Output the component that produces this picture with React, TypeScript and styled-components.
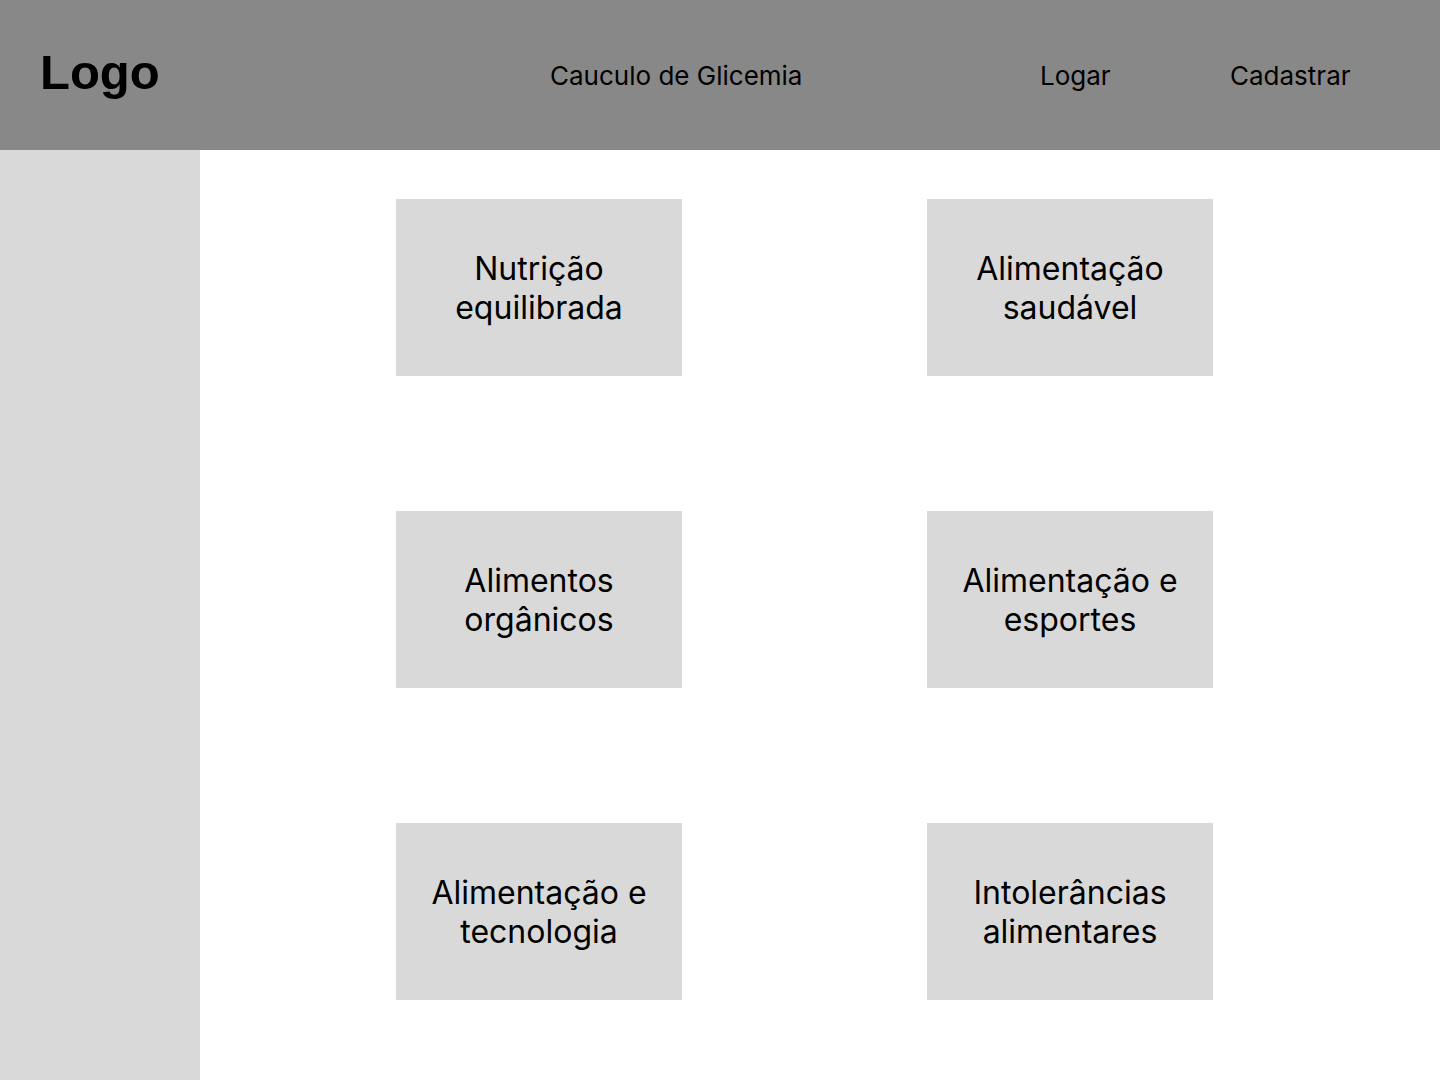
import React from "react";
import styled, { createGlobalStyle } from "styled-components";

const GlobalStyle = createGlobalStyle`
  html, body { margin: 0; padding: 0; background: #ffffff; }
  body { font-family: Inter, "Noto Sans", sans-serif; color: #000; }
`;

const Page = styled.div`
  width: 1440px;
  height: 1080px;
  display: flex;
  flex-direction: column;
  overflow: hidden;
`;

const Header = styled.header`
  height: 150px;
  flex: 0 0 150px;
  background: #888888;
  display: flex;
  align-items: center;
  padding: 0 0 0 40px;
  box-sizing: border-box;
`;

const Logo = styled.div`
  font-family: "Liberation Sans", Arial, sans-serif;
  font-weight: 700;
  font-size: 49px;
  line-height: 1;
  width: 510px;
  margin-top: -6px;
`;

const NavLink = styled.a<{ $w: number }>`
  font-family: Inter, sans-serif;
  font-size: 26px;
  line-height: 1.2;
  color: #000;
  text-decoration: none;
  width: ${(p) => p.$w}px;
  margin-top: 2px;
`;

const Body = styled.div`
  flex: 1;
  display: flex;
`;

const Sidebar = styled.aside`
  width: 200px;
  background: #d9d9d9;
`;

const Content = styled.main`
  flex: 1;
  display: grid;
  grid-template-columns: 286px 286px;
  grid-auto-rows: 177px;
  column-gap: 245px;
  row-gap: 135px;
  padding: 49px 0 0 196px;
  align-content: start;
`;

const Card = styled.div`
  background: #d9d9d9;
  display: flex;
  align-items: center;
  justify-content: center;
  text-align: center;
  font-family: Inter, sans-serif;
  font-size: 32px;
  line-height: 39px;
  padding: 0 16px;
`;

const topics = [
  ["Nutrição", "equilibrada"],
  ["Alimentação", "saudável"],
  ["Alimentos", "orgânicos"],
  ["Alimentação e", "esportes"],
  ["Alimentação e", "tecnologia"],
  ["Intolerâncias", "alimentares"],
];

export default function App() {
  return (
    <Page>
      <GlobalStyle />
      <Header>
        <Logo>Logo</Logo>
        <NavLink $w={490} href="#">Cauculo de Glicemia</NavLink>
        <NavLink $w={190} href="#">Logar</NavLink>
        <NavLink $w={160} href="#">Cadastrar</NavLink>
      </Header>
      <Body>
        <Sidebar />
        <Content>
          {topics.map((t, i) => (
            <Card key={i}>
              {t[0]}
              <br />
              {t[1]}
            </Card>
          ))}
        </Content>
      </Body>
    </Page>
  );
}
